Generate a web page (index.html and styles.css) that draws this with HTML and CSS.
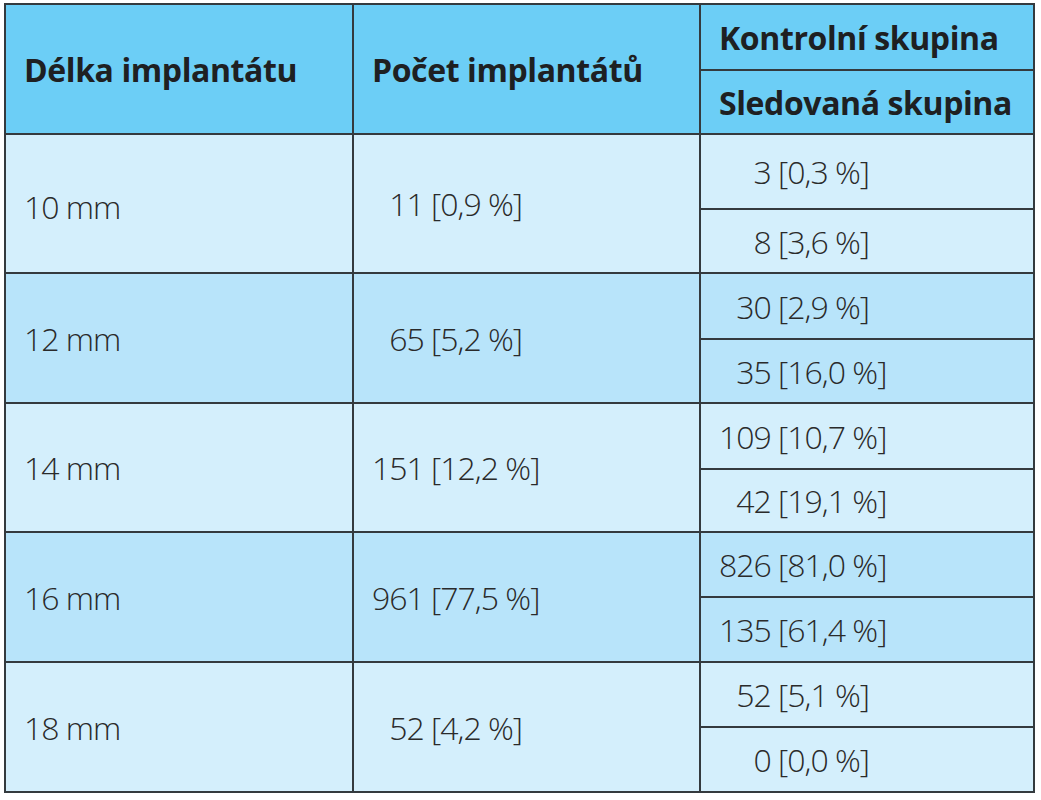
FILE: index.html
```html
<!DOCTYPE html>
<html lang="cs">
<head>
<meta charset="utf-8">
<title>Délka implantátu</title>
<link rel="stylesheet" href="styles.css">
</head>
<body>
<div class="table">
  <div class="cell head span2">Délka implantátu</div>
  <div class="cell head span2">Počet implantátů</div>
  <div class="cell head">Kontrolní skupina</div>
  <div class="cell head">Sledovaná skupina</div>

  <div class="cell light span2 first">10 mm</div>
  <div class="cell light span2">&#8199;11 [0,9 %]</div>
  <div class="cell light">&#8199;&#8199;3 [0,3 %]</div>
  <div class="cell light">&#8199;&#8199;8 [3,6 %]</div>

  <div class="cell mid span2">12 mm</div>
  <div class="cell mid span2">&#8199;65 [5,2 %]</div>
  <div class="cell mid">&#8199;30 [2,9 %]</div>
  <div class="cell mid">&#8199;35 [16,0 %]</div>

  <div class="cell light span2">14 mm</div>
  <div class="cell light span2">151 [12,2 %]</div>
  <div class="cell light">109 [10,7 %]</div>
  <div class="cell light">&#8199;42 [19,1 %]</div>

  <div class="cell mid span2">16 mm</div>
  <div class="cell mid span2">961 [77,5 %]</div>
  <div class="cell mid">826 [81,0 %]</div>
  <div class="cell mid">135 [61,4 %]</div>

  <div class="cell light span2">18 mm</div>
  <div class="cell light span2">&#8199;52 [4,2 %]</div>
  <div class="cell light">&#8199;52 [5,1 %]</div>
  <div class="cell light">&#8199;&#8199;0 [0,0 %]</div>
</div>
</body>
</html>
```
FILE: styles.css
```css
html, body {
  margin: 0;
  padding: 0;
  background: #ffffff;
}
body {
  padding: 3px 0 0 4px;
  font-family: "Open Sans", "Liberation Sans", sans-serif;
}
.table {
  display: grid;
  width: 1031px;
  box-sizing: border-box;
  grid-template-columns: 346px 345px 332px;
  grid-template-rows: 64px 62px 73px 62px 64px 62px 64px 61px 63px 63px 63px 63px;
  gap: 2px;
  padding: 2px;
  background: #343a3e;
}
.cell {
  display: flex;
  align-items: center;
  padding-left: 18px;
  white-space: pre;
  font-size: 32px;
  letter-spacing: -1px;
  font-weight: 300;
  color: #2a2a2a;
}
.span2 {
  grid-row: span 2;
}
.first {
  padding-top: 6px;
}
.head {
  background: #6ccef6;
  font-weight: 700;
  font-size: 32px;
  letter-spacing: -0.4px;
  color: #1e2022;
}
.light {
  background: #d4effc;
}
.mid {
  background: #b8e4fa;
}
```
